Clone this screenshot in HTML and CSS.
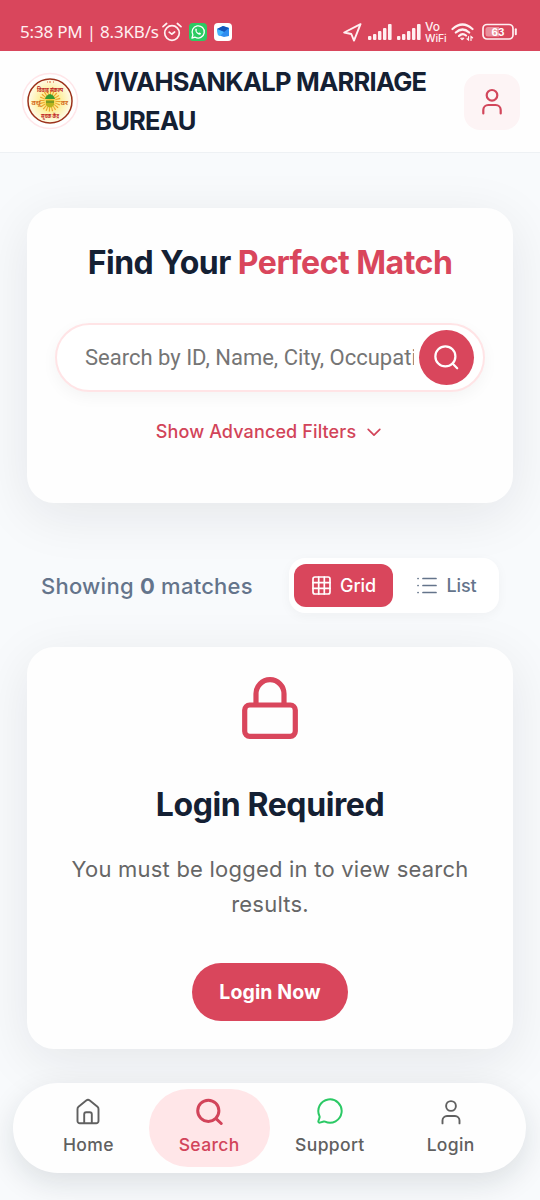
FILE: index.html
```html
<!DOCTYPE html>
<html lang="en">
<head>
<meta charset="utf-8">
<meta name="viewport" content="width=device-width, initial-scale=1">
<title>Vivahsankalp Marriage Bureau</title>
<link rel="stylesheet" href="styles.css">
</head>
<body>
<div class="status">
  <span class="clock">5:38 PM | 8.3KB/s</span>
  <svg class="alarm" width="20" height="20" viewBox="0 0 20 20" fill="none" stroke="currentColor" stroke-width="1.7" stroke-linecap="round" stroke-linejoin="round"><circle cx="10" cy="11" r="7.3"/><path d="M7.2 10.2 9.7 12.2 12.6 10M1 4.6 4.6 1.5M19 4.6 15.4 1.5"/></svg>
  <svg class="wa" width="18" height="18" viewBox="0 0 18 18"><rect width="18" height="18" rx="4" fill="#2ccb62"/><path d="M3 15l.9-3.1A6.1 6.1 0 1 1 6.200 14.200Z" fill="none" stroke="#fff" stroke-width="1.3" stroke-linejoin="round"/><path d="M6.300 6.100q.8-1 1.300 0l.4 1-.6.9q.8 1.500 2.300 2.100l.8-.7 1.500.8q.1 1.500-1.900 1.500Q6.100 10.500 6.300 6.100Z" fill="#fff"/></svg>
  <svg class="box" width="18" height="18" viewBox="0 0 18 18"><rect width="18" height="18" rx="4" fill="#fff"/><path d="M3 6l6-3 6 2v8l-5 1-6-2Z" fill="#2f8df0"/><path d="M3 6l6-3 6 2-5 4Z" fill="#1455b8"/><path d="M3 6l7 3-4 4-2-1Z" fill="#44b4ff"/></svg>
  <span class="spacer"></span>
  <svg class="loc" width="19" height="19" viewBox="0 0 19 19" fill="none" stroke="currentColor" stroke-width="1.9" stroke-linejoin="round"><path d="M17.500 1.200 1.200 9.500 8.300 11 11 17.600Z"/></svg>
  <svg class="sig" width="24" height="16" viewBox="0 0 24 16" fill="currentColor"><rect y="12" width="3.400" height="4" rx="1"/><rect x="5" y="10" width="3.400" height="6" rx="1"/><rect x="10" y="7" width="3.400" height="9" rx="1"/><rect x="15" y="4" width="3.400" height="12" rx="1"/><rect x="20" width="3.600" height="16" rx="1"/></svg>
  <svg class="sig" width="24" height="16" viewBox="0 0 24 16" fill="currentColor"><rect y="12" width="3.400" height="4" rx="1"/><rect x="5" y="10" width="3.400" height="6" rx="1"/><rect x="10" y="7" width="3.400" height="9" rx="1"/><rect x="15" y="4" width="3.400" height="12" rx="1"/><rect x="20" width="3.600" height="16" rx="1"/></svg>
  <span class="vo"><span class="vo-top">Vo</span><br>WiFi</span>
  <svg class="wifi" width="24" height="19" viewBox="0 0 24 19" fill="none" stroke="currentColor" stroke-width="2.200" stroke-linecap="round"><path d="M1.500 6Q11.500-3 21.500 6M4.800 9.500Q11.500 3.500 18.200 9.500M8 13Q11.500 9.500 15 12.500"/><path d="M10 15.200h3l-1.500 1.600z" fill="currentColor" stroke-width="1"/><path d="M17.500 13.500v3.500l-1.500-1.200M20 17.500v-4l1.600 1.300" stroke-width="1.200"/></svg>
  <svg class="battery" width="36" height="18" viewBox="0 0 36 18"><rect x="1" y="1.500" width="30" height="14.500" rx="4" fill="none" stroke="currentColor" stroke-width="1.700"/><path d="M6 4h11v9.500H6q-2.500 0-2.500-2.500V6.500Q3.500 4 6 4Z" fill="#ea8f9c"/><path d="M33.800 6.300v5" stroke="currentColor" stroke-width="2" stroke-linecap="round"/><text x="16" y="12.500" text-anchor="middle" class="pct">63</text></svg>
</div>
<header class="header">
  <svg class="logo" width="58" height="58" viewBox="0 0 58 58">
    <defs><radialGradient id="sun"><stop offset="0" stop-color="#f6b91b"/><stop offset=".35" stop-color="#fdec8a"/><stop offset="1" stop-color="#fffbea"/></radialGradient></defs>
    <circle cx="29" cy="29" r="27.500" fill="#fff" stroke="#ffe6e9" stroke-width="1.500"/>
    <circle cx="29" cy="29" r="22" fill="url(#sun)" stroke="#9c321b" stroke-width="1.500"/>
    <circle cx="29" cy="29" r="8" fill="none" stroke="#eba12c" stroke-width="5" stroke-dasharray="1 1.500"/>
    <path d="M24 27q1-4 5-5 4 1 5 5Z" fill="#369b30"/><path d="M25 28h8v5q-4 5-8 0Z" fill="#b8b31c"/><path d="M25 30h8" stroke="#438529"/>
    <text class="deva" x="29" y="19.500" text-anchor="middle" textLength="26" lengthAdjust="spacingAndGlyphs">विवाह संकल्प</text>
    <text class="deva side" x="15" y="32.500" text-anchor="middle">वधू</text><text class="deva side" x="43.500" y="32.500" text-anchor="middle">वर</text>
    <text class="deva" x="29" y="46" text-anchor="middle" textLength="18" lengthAdjust="spacingAndGlyphs">सूचक केंद्र</text>
    <path d="M26 10h1M29 9v2M32 10h1" stroke="#e05b32"/>
  </svg>
  <h1 class="brand">VIVAHSANKALP MARRIAGE<br>BUREAU</h1>
  <button class="profile" aria-label="Profile"><svg width="32" height="32" viewBox="0 0 32 32" class="line"><circle cx="16" cy="9.300" r="5.300"/><path d="M7.300 27.500V24a5 5 0 0 1 5-5h7.400a5 5 0 0 1 5 5v3.500"/></svg></button>
</header>
<main class="main">
  <section class="card search-card">
    <h2 class="find">Find Your <span>Perfect Match</span></h2>
    <div class="searchbox">
      <input class="query" type="text" placeholder="Search by ID, Name, City, Occupation" aria-label="Search profiles">
      <button class="go" aria-label="Search"><svg width="27" height="27" viewBox="0 0 24 24" class="line"><circle cx="11" cy="11" r="8.900"/><path d="m21.500 21.500-4.100-4.100"/></svg></button>
    </div>
    <div class="advanced"><span>Show Advanced Filters</span><svg width="14" height="9" viewBox="0 0 14 9" class="line"><path d="M1.200 1.300 7 7.100 12.800 1.300"/></svg></div>
  </section>
  <div class="results">
    <p class="count">Showing <b>0</b> matches</p>
    <div class="toggle">
      <div class="tab on"><svg width="19" height="19" viewBox="0 0 19 19" class="line"><rect x="1" y="1" width="17" height="17" rx="2"/><path d="M6.700 1v17M12.300 1v17M1 6.700h17M1 12.300h17"/></svg><span>Grid</span></div>
      <div class="tab"><svg width="20" height="17" viewBox="0 0 20 17" class="line"><path d="M6 1.500h13M6 8.500h13M6 15.500h13M1 1.500h.1M1 8.500h.1M1 15.500h.1"/></svg><span>List</span></div>
    </div>
  </div>
  <section class="card login-card">
    <svg class="lock" width="56" height="62" viewBox="0 0 56 62"><rect x="2.700" y="28" width="50.600" height="31.300" rx="5"/><path d="M14 28V16.700a14 14 0 0 1 28 0V28"/></svg>
    <h2 class="required">Login Required</h2>
    <p class="message">You must be logged in to view search<br>results.</p>
    <button class="login-btn">Login Now</button>
  </section>
</main>
<nav class="nav">
  <a class="item"><svg width="28" height="28" viewBox="0 0 28 28" class="line"><path d="M3.500 12q0-1.500 1-2.300l7.700-6.300q1.800-1.300 3.600 0l7.700 6.300q1 .8 1 2.300V24a2.300 2.300 0 0 1-2.300 2.300H5.800A2.300 2.300 0 0 1 3.500 24Z"/><path d="M10.200 26V17.200a2 2 0 0 1 2-2h3.600a2 2 0 0 1 2 2V26"/></svg><span>Home</span></a>
  <a class="item active"><svg width="28" height="28" viewBox="0 0 28 28" class="line"><circle cx="13.300" cy="13.800" r="10.600"/><path d="m21.300 21.800 4.900 4.700"/></svg><span>Search</span></a>
  <a class="item support"><svg width="28" height="28" viewBox="0 0 24 24" class="line"><path d="M2.992 16.342a2 2 0 0 1 .094 1.167l-1.065 3.290a1 1 0 0 0 1.236 1.168l3.413-.998a2 2 0 0 1 1.099.092 10 10 0 1 0-4.777-4.719"/></svg><span>Support</span></a>
  <a class="item"><svg width="28" height="28" viewBox="0 0 28 28" class="line"><circle cx="14" cy="9" r="4.900"/><path d="M5.500 26.400V23.500a4.500 4.500 0 0 1 4.500-4.500h8a4.500 4.500 0 0 1 4.500 4.500v2.900"/></svg><span>Login</span></a>
</nav>
</body>
</html>
```
FILE: styles.css
```css
* { box-sizing: border-box; }
body { margin: 0; width: 540px; height: 1200px; overflow: hidden; display: flex; flex-direction: column; background: #f8fafc; font-family: Inter, "Open Sans", sans-serif; color: #142033; }
h1, h2, p { margin: 0; }
svg { display: block; flex: none; }
button { border: 0; padding: 0; font: inherit; }
.line { fill: none; stroke: currentColor; stroke-width: 2; stroke-linecap: round; stroke-linejoin: round; }
.status { height: 51px; flex: none; background: #d9465c; color: #fff0f1; display: flex; align-items: center; padding: 13px 22px 0 20px; }
.clock { font: 17px/20px "Noto Sans", sans-serif; width: 142px; white-space: nowrap; letter-spacing: -.2px; }
.wa { margin-left: 7px; }
.box { margin-left: 7px; }
.spacer { flex: 1; }
.sig { margin-left: 5.5px; }
.vo { font: 500 10.5px/11px Inter, sans-serif; margin-left: 4px; width: 22px; white-space: nowrap; letter-spacing: -.15px; }
.vo-top { font-size: 12px; }
.wifi { margin-left: 4px; }
.battery { margin-left: 7px; }
.pct { font: 700 10px Inter, sans-serif; fill: #fff; }
.header { height: 102px; flex: none; display: flex; align-items: center; background: #fefefe; border-bottom: 1px solid #eef1f4; padding: 0 20px 0 21px; position: relative; z-index: 1; }
.logo { margin-top: -1px; }
.deva { font: 700 6px "Noto Sans Devanagari", "Noto Sans", sans-serif; fill: #bd1d22; }
.side { fill: #d46c20; font-size: 7px; }
.brand { flex: 1; margin: -2px 0 0 16px; font-size: 25.5px; line-height: 39px; font-weight: 700; letter-spacing: -.72px; white-space: nowrap; }
.profile { width: 56px; height: 56px; border-radius: 16px; background: #fdf4f5; color: #d2465b; display: grid; place-items: center; }
.profile svg { stroke-width: 2.2; }
.main { padding: 55px 27px 0; height: 896px; flex: none; }
.card { width: 486px; border-radius: 27px; background: #fefefe; box-shadow: 0 12px 54px rgba(20, 25, 30, .085); display: flex; flex-direction: column; align-items: center; }
.search-card { height: 295px; padding-top: 33px; }
.find { font-size: 32px; line-height: 43px; font-weight: 700; letter-spacing: -.5px; white-space: nowrap; }
.find span { color: #d9465c; }
.searchbox { width: 430px; height: 69px; margin-top: 39px; border: 2px solid #ffe4e6; border-radius: 35px; background: #fff; padding: 0 9px 0 28px; display: flex; align-items: center; box-shadow: 0 5px 16px rgba(0, 0, 0, .045); }
.query { width: 329px; min-width: 0; border: 0; padding: 0; outline: 0; background: transparent; font: 22px/32px Roboto, sans-serif; margin-right: 5px; }
.query::placeholder { color: #757575; }
.go { width: 55px; height: 55px; border-radius: 50%; flex: none; color: #fff; background: #d9465c; display: grid; place-items: center; }
.advanced { display: flex; align-items: center; gap: 11px; margin: 26px 3px 0 0; color: #d24459; font-size: 18px; line-height: 28px; font-weight: 500; letter-spacing: .12px; }
.advanced svg { stroke-width: 1.7; }
.results { height: 144px; display: flex; align-items: center; justify-content: space-between; padding: 21px 14px 0 14px; }
.count { color: #64748b; font-size: 22px; line-height: 30px; font-weight: 500; letter-spacing: .25px; white-space: nowrap; }
.toggle { width: 210px; height: 55px; padding: 6px 5px; background: #fff; border-radius: 16px; display: flex; box-shadow: 0 3px 12px rgba(0, 0, 0, .04); }
.tab { width: 100px; display: flex; align-items: center; justify-content: center; gap: 9px; color: #64748b; font-size: 18px; font-weight: 500; letter-spacing: -.1px; padding-left: 8px; }
.tab svg { stroke-width: 1.7; }
.tab.on { width: 99px; padding: 0 0 0 1px; background: #d9465c; color: #fff; border-radius: 12px; }
.login-card { height: 402px; padding-top: 30px; }
.lock { fill: none; stroke: #d9465c; stroke-width: 5.2; }
.required { font-size: 32px; line-height: 42px; letter-spacing: -.4px; font-weight: 700; margin-top: 45px; }
.message { text-align: center; margin-top: 26px; font-size: 22px; line-height: 35px; letter-spacing: .22px; color: #666; white-space: nowrap; }
.login-btn { margin-top: 41px; width: 156px; height: 58px; border-radius: 29px; background: #d9465c; color: #fff; font-size: 19.5px; font-weight: 700; letter-spacing: .1px; }
.nav { margin: 34px 14px 0 13px; height: 90px; flex: none; border-radius: 45px; background: #fefefe; padding: 6px 15px; display: flex; box-shadow: 0 10px 30px rgba(20, 30, 40, .12); position: relative; z-index: 1; }
.item { width: 121px; height: 78px; border-radius: 39px; display: flex; flex-direction: column; align-items: center; color: #606060; font-size: 17.5px; line-height: 24px; font-weight: 500; letter-spacing: .35px; padding-top: 8px; }
.item svg { height: 28px; margin-bottom: 8px; stroke-width: 1.9; }
.item.active { background: #ffe6e8; color: #d2445a; }
.item.active svg { stroke-width: 3; }
.item.support svg { color: #2bc965; stroke-width: 1.7; }
```
